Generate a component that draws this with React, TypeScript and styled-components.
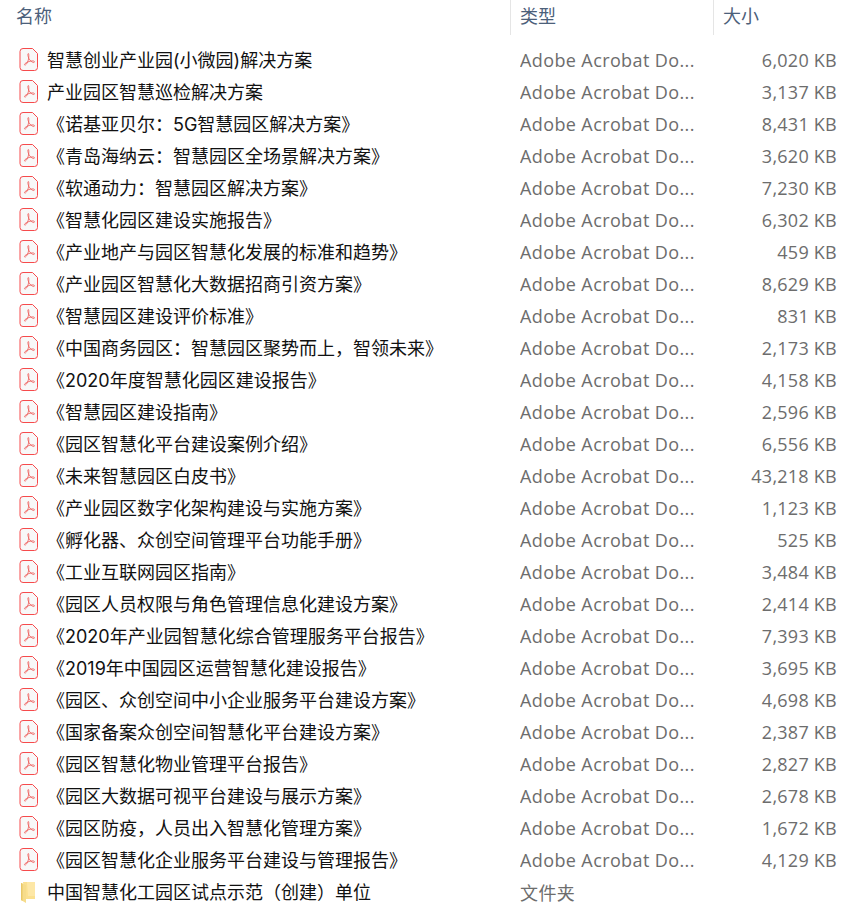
import styled, { createGlobalStyle } from "styled-components";

const files: [string, string][] = [
  ["智慧创业产业园(小微园)解决方案", "6,020 KB"],
  ["产业园区智慧巡检解决方案", "3,137 KB"],
  ["《诺基亚贝尔：5G智慧园区解决方案》", "8,431 KB"],
  ["《青岛海纳云：智慧园区全场景解决方案》", "3,620 KB"],
  ["《软通动力：智慧园区解决方案》", "7,230 KB"],
  ["《智慧化园区建设实施报告》", "6,302 KB"],
  ["《产业地产与园区智慧化发展的标准和趋势》", "459 KB"],
  ["《产业园区智慧化大数据招商引资方案》", "8,629 KB"],
  ["《智慧园区建设评价标准》", "831 KB"],
  ["《中国商务园区：智慧园区聚势而上，智领未来》", "2,173 KB"],
  ["《2020年度智慧化园区建设报告》", "4,158 KB"],
  ["《智慧园区建设指南》", "2,596 KB"],
  ["《园区智慧化平台建设案例介绍》", "6,556 KB"],
  ["《未来智慧园区白皮书》", "43,218 KB"],
  ["《产业园区数字化架构建设与实施方案》", "1,123 KB"],
  ["《孵化器、众创空间管理平台功能手册》", "525 KB"],
  ["《工业互联网园区指南》", "3,484 KB"],
  ["《园区人员权限与角色管理信息化建设方案》", "2,414 KB"],
  ["《2020年产业园智慧化综合管理服务平台报告》", "7,393 KB"],
  ["《2019年中国园区运营智慧化建设报告》", "3,695 KB"],
  ["《园区、众创空间中小企业服务平台建设方案》", "4,698 KB"],
  ["《国家备案众创空间智慧化平台建设方案》", "2,387 KB"],
  ["《园区智慧化物业管理平台报告》", "2,827 KB"],
  ["《园区大数据可视平台建设与展示方案》", "2,678 KB"],
  ["《园区防疫，人员出入智慧化管理方案》", "1,672 KB"],
  ["《园区智慧化企业服务平台建设与管理报告》", "4,129 KB"],
];

const GlobalStyle = createGlobalStyle`
  html, body {
    margin: 0;
    padding: 0;
    background: #ffffff;
    overflow: hidden;
  }
`;

const Explorer = styled("div")`
  width: 844px;
  height: 910px;
  overflow: hidden;
  font-family: "Open Sans", "Noto Sans CJK SC", sans-serif;
  font-size: 18px;
`;

const HeaderRow = styled("div")`
  display: grid;
  grid-template-columns: 510px 203px 131px;
  height: 35px;
  color: #4c607a;
`;

const HeaderCell = styled("div")<{ $divider?: boolean }>`
  display: flex;
  align-items: center;
  padding-left: ${(props) => (props.$divider ? "9px" : "16px")};
  padding-bottom: 5px;
  box-sizing: border-box;
  border-left: ${(props) => (props.$divider ? "1px solid #e5e5e5" : "none")};
`;

const FileList = styled("div")`
  display: flex;
  flex-direction: column;
  padding-top: 9px;
`;

const FileRow = styled("div")`
  display: grid;
  grid-template-columns: 520px 182px 135px;
  align-items: center;
  height: 32px;
`;

const NameCell = styled("div")`
  display: flex;
  align-items: center;
  padding-left: 19px;
  color: #111111;
  white-space: nowrap;
  font-family: "Inter", "Noto Sans CJK SC", sans-serif;
`;

const NameText = styled("span")`
  margin-bottom: 2px;
`;

const IconSlot = styled("svg")`
  flex: none;
  width: 20px;
  height: 24px;
  margin-right: 8px;
  margin-top: -2px;
  overflow: visible;
`;

const TypeCell = styled("div")`
  color: #6d6d6d;
  white-space: nowrap;
  overflow: hidden;
  letter-spacing: 0.39px;
`;

const SizeCell = styled("div")`
  color: #6d6d6d;
  text-align: right;
  white-space: nowrap;
  letter-spacing: 0.25px;
`;

function PdfIcon() {
  return (
    <IconSlot viewBox="0 0 20 24">
      <path
        d="M4 1.500h9.500l5 5V20.500a3 3 0 0 1-3 3H4a3 3 0 0 1-3-3V4.500a3 3 0 0 1 3-3z"
        fill="#f8f8f8"
        stroke="#f64a4c"
        strokeWidth="1"
      />
      <path
        d="M9.300 6.500c-.9.300-.3 3.200.6 5 .9 1.800 3.200 4.200 5 4 1-.2.600-1.500-.7-1.600-2.200-.2-6.400 1-8.200 2.700-.9.900-.5 1.900.4 1.400 1.600-.9 3-4.400 3.300-7 .2-1.900.2-4.700-.4-4.500z"
        fill="none"
        stroke="#ee5a58"
        strokeWidth="0.8"
      />
    </IconSlot>
  );
}

function FolderIcon() {
  return (
    <IconSlot viewBox="0 0 20 24">
      <path d="M4 3h12v17H6z" fill="#fbe08f" />
      <path d="M8 3h8v14H9z" fill="#fde7a6" />
      <path d="M2 4l5 2v18l-5-3z" fill="#f6dc8b" />
      <path d="M2 4l1.500.6V21.900L2 21z" fill="#e9c868" />
    </IconSlot>
  );
}

export default function App() {
  return (
    <Explorer>
      <GlobalStyle />
      <HeaderRow>
        <HeaderCell>名称</HeaderCell>
        <HeaderCell $divider>类型</HeaderCell>
        <HeaderCell $divider>大小</HeaderCell>
      </HeaderRow>
      <FileList>
        {files.map(([name, size]) => (
          <FileRow key={name}>
            <NameCell>
              <PdfIcon />
              <NameText>{name}</NameText>
            </NameCell>
            <TypeCell>Adobe Acrobat Do...</TypeCell>
            <SizeCell>{size}</SizeCell>
          </FileRow>
        ))}
        <FileRow>
          <NameCell>
            <FolderIcon />
            <NameText>中国智慧化工园区试点示范（创建）单位</NameText>
          </NameCell>
          <TypeCell>文件夹</TypeCell>
          <SizeCell />
        </FileRow>
      </FileList>
    </Explorer>
  );
}
